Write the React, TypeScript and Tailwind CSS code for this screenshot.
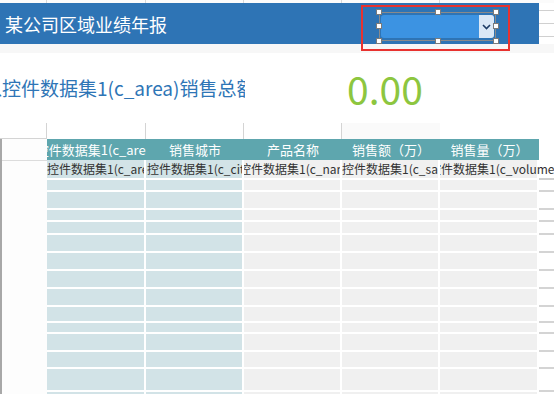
const font = "font-['Noto_Sans_CJK_SC','Noto_Sans',sans-serif]";

const rowHeights = [12, 18, 12, 13, 18, 18, 18, 18, 16, 11, 18, 17, 23, 10];

const cols = [
  { w: "w-[99px]", head: "控件数据集1(c_area)", data: "控件数据集1(c_area)", bg: "bg-[#d2e3e7]", shift: "ml-0" },
  { w: "w-[98px]", head: "销售城市", data: "控件数据集1(c_city)", bg: "bg-[#d2e3e7]", shift: "ml-[1px]" },
  { w: "w-[98px]", head: "产品名称", data: "控件数据集1(c_name)", bg: "bg-[#f0f0f0]", shift: "ml-[-5px]" },
  { w: "w-[98px]", head: "销售额（万）", data: "控件数据集1(c_sales)", bg: "bg-[#f0f0f0]", shift: "ml-0" },
  { w: "w-[99px]", head: "销售量（万）", data: "控件数据集1(c_volume)", bg: "bg-[#f0f0f0]", shift: "ml-[-11px]" },
];

function Handle({ pos }: { pos: string }) {
  return <div className={`absolute w-[6px] h-[6px] bg-white border border-[#7a7a7a] ${pos}`} />;
}

function AreaSelect() {
  return (
    <div className="absolute left-[361px] top-[2px] w-[149px] h-[46px] border-2 border-[#e8322f]">
      <div className="absolute left-[16px] top-[5px] w-[117px] h-[29px] border border-[#8a8a8a]">
        <div className="absolute left-[1px] top-[2px] w-[113px] h-[23px] rounded-[3px] bg-[#3c93e2] overflow-hidden flex justify-end">
          <div className="w-[15px] h-full bg-[#dbe8f6] flex items-center justify-center">
            <svg width="9" height="6" viewBox="0 0 9 6" fill="none">
              <path d="M1 1l3.5 3.5L8 1" stroke="#1f3d66" strokeWidth="1.6" />
            </svg>
          </div>
        </div>
        <Handle pos="left-[-4px] top-[-4px]" />
        <Handle pos="left-[55px] top-[-4px]" />
        <Handle pos="right-[-4px] top-[-4px]" />
        <Handle pos="left-[-4px] top-[10px]" />
        <Handle pos="right-[-4px] top-[10px]" />
        <Handle pos="left-[-4px] bottom-[-4px]" />
        <Handle pos="left-[55px] bottom-[-4px]" />
        <Handle pos="right-[-4px] bottom-[-4px]" />
      </div>
    </div>
  );
}

export default function App() {
  return (
    <div className={`w-[554px] h-[394px] overflow-hidden bg-white ${font}`}>
      {/* top grid strip */}
      <div className="h-[3px] flex bg-[#fbfbfb]">
        <div className="w-[47px] border-r border-[#d8d8d8]" />
        <div className="w-[99px] border-r border-[#d8d8d8]" />
        <div className="w-[98px] border-r border-[#d8d8d8]" />
        <div className="w-[98px] border-r border-[#d8d8d8]" />
        <div className="w-[98px] border-r border-[#d8d8d8]" />
      </div>

      {/* title bar */}
      <div className="flex h-[41px] relative">
        <div className="w-[539px] h-full bg-[#2e74b5] flex items-center pl-[5px]">
          <span className="text-white text-[18px] leading-none">某公司区域业绩年报</span>
        </div>
        <div className="flex-1 flex flex-col justify-between py-[7px]">
          <div className="h-px bg-[#d0d0d0]" />
          <div className="h-px bg-[#d0d0d0]" />
          <div className="h-px bg-[#d0d0d0]" />
        </div>
        <AreaSelect />
      </div>

      <div className="h-[9px] bg-[#f7f7f7]" />

      {/* total row */}
      <div className="h-[70px] flex items-center">
        <div className="w-[245px] overflow-hidden">
          <div className="ml-[-17px] whitespace-nowrap text-[19px] text-[#2e75b6] leading-normal">
            以控件数据集1(c_area)销售总额
          </div>
        </div>
        <div className="ml-[102px] text-[39px] leading-none text-[#8dc63f]">0.00</div>
      </div>

      {/* blank grid row */}
      <div className="h-[16px] flex">
        <div className="w-[47px] border-r border-b border-[#d4d4d4]" />
        <div className="w-[99px] border-r border-[#d4d4d4]" />
        <div className="w-[98px] border-r border-[#d4d4d4]" />
        <div className="w-[98px] border-r border-[#d4d4d4]" />
        <div className="w-[98px] bg-[#fafafa]" />
      </div>

      {/* table */}
      <div className="flex">
        <div className="w-[47px] border-l-2 border-[#a8a8a8] bg-[#fdfdfd] flex flex-col">
          <div className="h-[22px] border-b border-[#dcdcdc]" />
        </div>

        <div className="w-[492px] flex flex-col">
          <div className="h-[21px] bg-[#5ea6ae] flex text-white text-[13px]">
            {cols.map((c) => (
              <div key={c.head} className={`${c.w} overflow-hidden flex items-center justify-center whitespace-nowrap`}>
                {c.head}
              </div>
            ))}
          </div>
          <div className="h-[20px] flex text-[12px] text-[#333]">
            {cols.map((c, i) => (
              <div
                key={c.data}
                className={`${c.w} ${c.bg} border-r-2 border-b-2 border-white flex items-center whitespace-nowrap ${
                  i === 4 ? "[clip-path:inset(0_-40px_0_0)]" : "overflow-hidden"
                }`}
              >
                <span className={`${c.shift} leading-normal`}>{c.data}</span>
              </div>
            ))}
          </div>
          {rowHeights.map((h, r) => (
            <div key={r} className="flex" style={{ height: h }}>
              {cols.map((c) => (
                <div key={c.head} className={`${c.w} ${c.bg} border-r-2 border-b-2 border-white`} />
              ))}
            </div>
          ))}
        </div>

        <div className="flex-1 flex flex-col">
          <div className="h-[21px]" />
          <div className="h-[20px] border-b-2 border-[#cfcfcf]" />
          {rowHeights.map((h, r) => (
            <div key={r} className="border-b-2 border-[#d4d4d4]" style={{ height: h }} />
          ))}
        </div>
      </div>
    </div>
  );
}
